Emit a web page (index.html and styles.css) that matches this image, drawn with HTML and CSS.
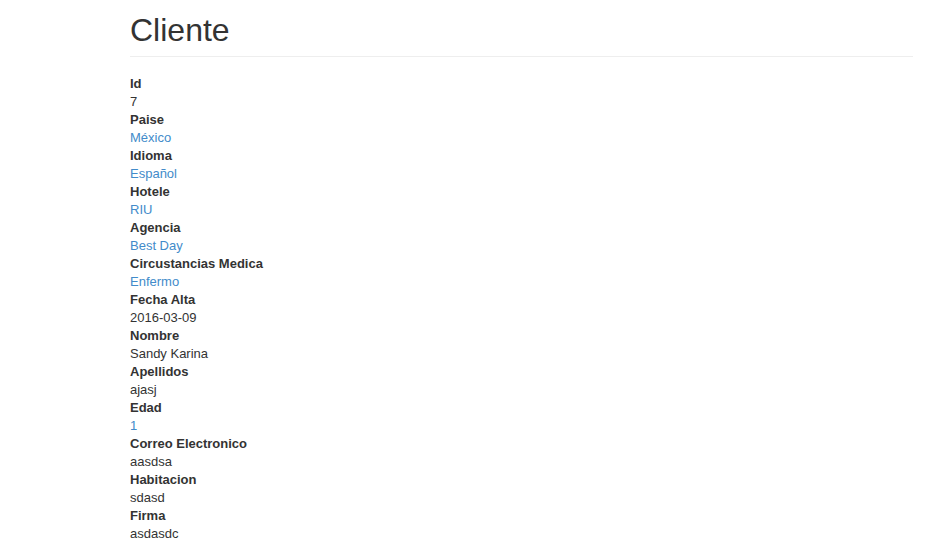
FILE: index.html
```html
<!DOCTYPE html>
<html lang="es">
<head>
<meta charset="utf-8">
<title>Cliente</title>
<link rel="stylesheet" href="styles.css">
</head>
<body>
<main class="page">
  <div class="page-header">
    <h1>Cliente</h1>
  </div>
  <dl class="details">
    <dt>Id</dt>
    <dd>7</dd>
    <dt>Paise</dt>
    <dd><a href="#">México</a></dd>
    <dt>Idioma</dt>
    <dd><a href="#">Español</a></dd>
    <dt>Hotele</dt>
    <dd><a href="#">RIU</a></dd>
    <dt>Agencia</dt>
    <dd><a href="#">Best Day</a></dd>
    <dt>Circustancias Medica</dt>
    <dd><a href="#">Enfermo</a></dd>
    <dt>Fecha Alta</dt>
    <dd>2016-03-09</dd>
    <dt>Nombre</dt>
    <dd>Sandy Karina</dd>
    <dt>Apellidos</dt>
    <dd>ajasj</dd>
    <dt>Edad</dt>
    <dd><a href="#">1</a></dd>
    <dt>Correo Electronico</dt>
    <dd>aasdsa</dd>
    <dt>Habitacion</dt>
    <dd>sdasd</dd>
    <dt>Firma</dt>
    <dd>asdasdc</dd>
  </dl>
</main>
</body>
</html>
```
FILE: styles.css
```css
html, body {
  margin: 0;
  padding: 0;
  background: #fff;
}
body {
  font-family: "Liberation Sans", Arial, Helvetica, sans-serif;
  font-size: 13px;
  line-height: 18px;
  color: #333;
}
.page {
  margin: 0 31px 0 130px;
}
.page-header {
  border-bottom: 1px solid #eee;
  padding-bottom: 6px;
  margin: 0 0 18px;
}
.page-header h1 {
  margin: 0;
  padding-top: 10px;
  font-size: 32px;
  font-weight: 500;
  line-height: 40px;
  color: #333;
}
.details {
  margin: 0;
}
.details dt {
  font-weight: bold;
}
.details dd {
  margin: 0;
}
.details a {
  color: #428bca;
  text-decoration: none;
}
```
